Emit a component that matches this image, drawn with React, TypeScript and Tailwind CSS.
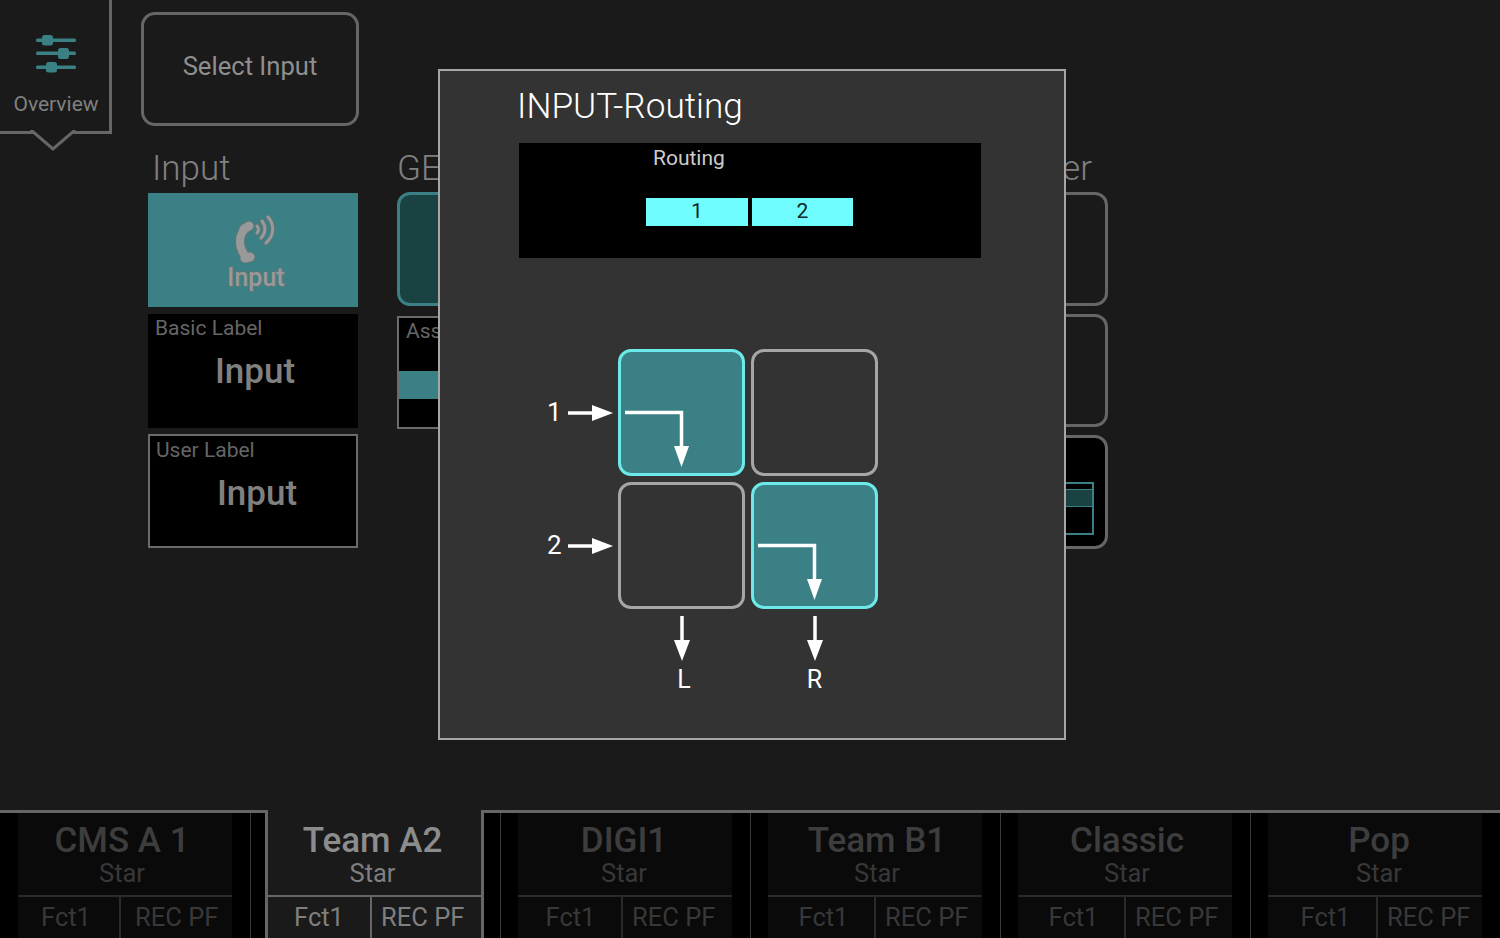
const font = "font-['Roboto',sans-serif]";

const tabs = [
  { name: "CMS A 1", nudge: "pr-[6px]", split: "w-[103px] pr-[5px]", rec: "pl-[14px]" },
  { name: "Team A2", active: true, nudge: "pr-[4px]", split: "w-[104px]", rec: "pl-[9px]" },
  { name: "DIGI1", nudge: "pr-[2px]", split: "w-[105px] pl-[2px]", rec: "pl-[9px]" },
  { name: "Team B1", nudge: "pl-[4px]", split: "w-[108px] pl-[5px]", rec: "pl-[9px]" },
  { name: "Classic", nudge: "pl-[4px]", split: "w-[108px] pl-[5px]", rec: "pl-[9px]" },
  { name: "Pop", nudge: "pl-[8px]", split: "w-[110px] pl-[7px]", rec: "pl-[9px]" },
];

function PhoneIcon() {
  return (
    <svg width="42" height="48" viewBox="0 0 42 48" className="block">
      <g fill="none" strokeLinecap="round">
        <path d="M11 13 C3 20 3 32 11 42" stroke="#5a7778" strokeWidth="10.5" />
        <path d="M14 11 L9 14 M10 43 L15 42" stroke="#5a7778" strokeWidth="11.5" />
        <path d="M22 11 C24 13 24 16 22 18" stroke="#5a7778" strokeWidth="5" />
        <path d="M27 6 C31 11 31 18 26 23" stroke="#5a7778" strokeWidth="5" />
        <path d="M33 2 C40 10 39 21 31 28" stroke="#5a7778" strokeWidth="5" />
        <path d="M11 13 C3 20 3 32 11 42" stroke="#999999" strokeWidth="8" />
        <path d="M14 11 L9 14 M10 43 L15 42" stroke="#999999" strokeWidth="9" />
        <path d="M22 11 C24 13 24 16 22 18" stroke="#999999" strokeWidth="3" />
        <path d="M27 6 C31 11 31 18 26 23" stroke="#999999" strokeWidth="3" />
        <path d="M33 2 C40 10 39 21 31 28" stroke="#999999" strokeWidth="3" />
      </g>
    </svg>
  );
}

function SlidersIcon() {
  return (
    <svg width="41" height="38" viewBox="0 0 41 38" className="block">
      <g fill="#3a8084">
        <rect x="0" y="3.5" width="40" height="3.5" rx="1.5" />
        <rect x="6" y="0" width="11" height="10.5" rx="2.5" />
        <rect x="0" y="16.5" width="40" height="3.5" rx="1.5" />
        <rect x="22" y="13" width="11" height="11" rx="2.5" />
        <rect x="0" y="30.5" width="40" height="3.5" rx="1.5" />
        <rect x="10" y="27" width="11" height="10.5" rx="2.5" />
      </g>
    </svg>
  );
}

function RightArrow() {
  return (
    <svg width="46" height="16" viewBox="0 0 46 16" className="block shrink-0">
      <path d="M0 8 H26" stroke="#fff" strokeWidth="3.5" />
      <path d="M24 0 L45 8 L24 16 Z" fill="#fff" />
    </svg>
  );
}

function DownArrow() {
  return (
    <svg width="16" height="46" viewBox="0 0 16 46" className="block">
      <path d="M8 0 V26" stroke="#fff" strokeWidth="3.5" />
      <path d="M0 24 L16 24 L8 45 Z" fill="#fff" />
    </svg>
  );
}

function RouteCell({ active }: { active?: boolean }) {
  return (
    <div
      className={`h-[127px] w-[127px] rounded-[13px] border-[3px] ${
        active ? "border-[#6ceaea] bg-[#3a8084]" : "border-[#a6a6a6]"
      }`}
    >
      {active && (
        <svg width="121" height="121" viewBox="0 0 121 121" className="block">
          <path d="M4 60.5 H60.5 V96" fill="none" stroke="#fff" strokeWidth="3.5" />
          <path d="M53 94 H68 L60.5 115 Z" fill="#fff" />
        </svg>
      )}
    </div>
  );
}

type BottomTabProps = {
  name: string;
  active?: boolean;
  first?: boolean;
  nudge: string;
  split: string;
  rec: string;
};

function BottomTab({ name, active, first, nudge, split, rec }: BottomTabProps) {
  const titleColor = active ? "text-[#8c8c8c]" : "text-[#3d3d3d]";
  const subColor = active ? "text-[#7f7f7f]" : "text-[#383838]";
  const lineColor = active ? "border-[#666666]" : "border-[#2a2a2a]";
  return (
    <div className={`flex w-[250px] shrink-0 bg-black ${first ? "pl-[18px]" : "border-l border-[#3a3a3a] pl-[17px]"}`}>
      <div
        className={`flex shrink-0 flex-col ${
          active
            ? "-mt-[3px] -ml-[3px] w-[219px] border-x-[3px] border-[#666666] bg-[#1a1a1a]"
            : "w-[214px] bg-[#0a0a0a]"
        }`}
      >
        <div className={`flex flex-col items-center ${nudge} ${active ? "h-[85px] pt-[11px]" : "h-[82px] pt-[8px]"}`}>
          <div className={`text-[35px] leading-[40px] font-medium ${titleColor}`}>{name}</div>
          <div className={`text-[25.5px] leading-[24px] ${subColor}`}>Star</div>
        </div>
        <div className={`flex flex-1 border-t-2 ${lineColor}`}>
          <div className={`flex items-center justify-center border-r-2 text-[25.5px] ${split} ${lineColor} ${subColor}`}>
            Fct1
          </div>
          <div className={`flex flex-1 items-center text-[25.5px] whitespace-nowrap ${rec} ${subColor}`}>REC PF</div>
        </div>
      </div>
    </div>
  );
}

export default function App() {
  return (
    <div className={`${font} relative flex h-[938px] w-[1500px] flex-col overflow-hidden bg-[#1a1a1a]`}>
      <div className="flex flex-1 items-start">
        {/* Overview tab */}
        <div className="relative flex h-[134px] w-[112px] shrink-0 flex-col items-center border-r-[3px] border-b-[3px] border-[#666666] pt-[35px] pl-[3px]">
          <SlidersIcon />
          <div className="mt-[18px] text-[21px] leading-[26px] text-[#808080]">Overview</div>
          <svg width="46" height="24" viewBox="0 0 46 24" className="absolute top-[130px] left-[30px]">
            <path d="M0 0 L1 0 L23 19 L45 0" fill="#1a1a1a" stroke="#666666" strokeWidth="3" />
          </svg>
        </div>

        <div className="flex flex-col pt-[12px]">
          <div className="ml-[29px] flex h-[114px] w-[218px] items-center justify-center rounded-[14px] border-[3px] border-[#666666] pb-[6px] text-[25.6px] text-[#8f8f8f]">
            Select Input
          </div>

          <div className="mt-[22px] ml-[36px] flex gap-[39px]">
            {/* Input column */}
            <div className="flex w-[210px] flex-col">
              <div className="h-[45px] pl-[4px] text-[35px] leading-[41px] font-light text-[#808080]">Input</div>
              <div className="flex h-[114px] flex-col items-center bg-[#3a8084] pt-[22px] pl-[6px]">
                <PhoneIcon />
                <div className="text-[25px] leading-[30px] font-medium text-[#999999] [paint-order:stroke_fill] [-webkit-text-stroke:2px_#5a7778]">
                  Input
                </div>
              </div>
              <div className="mt-[7px] h-[114px] bg-black pt-[1px] pl-[7px]">
                <div className="text-[21px] leading-[26px] text-[#666666]">Basic Label</div>
                <div className="pr-[3px] text-center text-[35px] leading-[61px] font-medium text-[#808080]">Input</div>
              </div>
              <div className="mt-[6px] h-[114px] border-2 border-[#6b6b6b] bg-black pt-[1px] pl-[6px]">
                <div className="text-[21px] leading-[26px] text-[#666666]">User Label</div>
                <div className="pl-[2px] text-center text-[35px] leading-[61px] font-medium text-[#808080]">Input</div>
              </div>
            </div>

            {/* GEQ column, mostly behind the dialog */}
            <div className="flex w-[210px] flex-col">
              <div className="h-[44px] text-[35px] leading-[41px] font-light text-[#808080]">GEQ</div>
              <div className="h-[114px] rounded-[13px] border-[3px] border-[#3a8084] bg-[#1a4242]" />
              <div className="mt-[10px] flex h-[113px] flex-col border-2 border-[#6b6b6b] bg-black">
                <div className="h-[53px] pl-[7px] text-[21px] leading-[26px] text-[#666666]">Assign</div>
                <div className="h-[28px] bg-[#3a8084]" />
              </div>
            </div>

            <div className="w-[212px]" />

            {/* Limiter column, mostly behind the dialog */}
            <div className="flex w-[211px] flex-col">
              <div className="h-[44px] pr-[16px] text-right text-[35px] leading-[41px] font-light text-[#808080]">
                Limiter
              </div>
              <div className="h-[114px] rounded-[13px] border-[3px] border-[#666666]" />
              <div className="mt-[8px] h-[113px] rounded-[13px] border-[3px] border-[#666666]" />
              <div className="mt-[8px] flex h-[114px] flex-col items-end rounded-[13px] border-[3px] border-[#666666] bg-black pt-[44px] pr-[11px]">
                <div className="h-[53px] w-[100px] border-2 border-[#3a8084]">
                  <div className="mt-[5px] h-[18px] border-y border-[#3a8084] bg-[#1a4242]" />
                </div>
              </div>
            </div>
          </div>
        </div>
      </div>

      {/* Bottom preset strip */}
      <div className="flex h-[128px] border-t-[3px] border-[#666666]">
        {tabs.map((tab, i) => (
          <BottomTab key={tab.name} {...tab} first={i === 0} />
        ))}
      </div>

      {/* INPUT-Routing dialog */}
      <div className="absolute top-[69px] left-[438px] flex h-[671px] w-[628px] flex-col border-2 border-[#a6a6a6] bg-[#333333] pl-[79px]">
        <div className="mt-[12px] -ml-[2px] h-[60px] text-[35.2px] leading-[46px] font-light text-white">INPUT-Routing</div>
        <div className="h-[115px] w-[462px] bg-black pt-[3px]">
          <div className="ml-[134px] text-[21px] leading-[24px] text-[#cccccc]">Routing</div>
          <div className="mt-[28px] ml-[127px] flex gap-[4px]">
            <div className="flex h-[28px] w-[102px] items-center justify-center bg-[#6ffcff] text-[21px] text-[#10282a]">1</div>
            <div className="flex h-[28px] w-[101px] items-center justify-center bg-[#6ffcff] text-[21px] text-[#10282a]">2</div>
          </div>
        </div>

        <div className="mt-[91px] -ml-[8px] grid grid-cols-[101px_127px_127px] grid-rows-[127px_127px_auto] gap-[6px] text-white">
          <div className="flex items-center gap-[9px] pl-[36px]">
            <span className="w-[12px] text-[26px]">1</span>
            <RightArrow />
          </div>
          <RouteCell active />
          <RouteCell />
          <div className="flex items-center gap-[9px] pl-[36px]">
            <span className="w-[12px] text-[26px]">2</span>
            <RightArrow />
          </div>
          <RouteCell />
          <RouteCell active />
          <div />
          <div className="flex flex-col items-center pt-[1px]">
            <DownArrow />
            <span className="mt-[4px] pl-[5px] text-[25px] leading-[28px]">L</span>
          </div>
          <div className="flex flex-col items-center pt-[1px]">
            <DownArrow />
            <span className="mt-[4px] text-[25px] leading-[28px]">R</span>
          </div>
        </div>
      </div>
    </div>
  );
}
